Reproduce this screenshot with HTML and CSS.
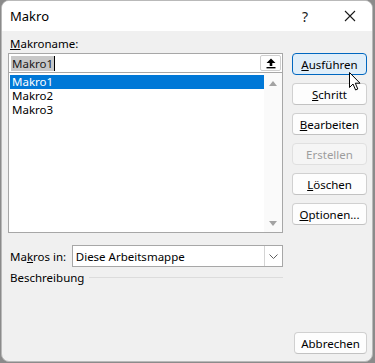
FILE: index.html
```html
<!DOCTYPE html>
<html lang="de">
<head>
  <meta charset="UTF-8" />
  <meta name="viewport" content="width=device-width, initial-scale=1.0"/>
  <title>Makro</title>
  <link rel="stylesheet" href="styles.css">
</head>
<body>
  <div class="window">
    <div class="titlebar">
      <span class="title">Makro</span>
      <span class="caption-btn">?</span>
      <span class="caption-btn close">
        <svg width="12" height="12" viewBox="0 0 12 12"><path d="M1 1 L11 11 M11 1 L1 11" stroke="#1a1a1a" stroke-width="1.1" fill="none"/></svg>
      </span>
    </div>

    <div class="content">
      <div class="left">
        <div class="label"><u>M</u>akroname:</div>
        <div class="namebox">
          <span class="name-sel">Makro1</span><span class="caret"></span>
          <span class="up-btn">
            <svg width="10" height="11" viewBox="0 0 10 11"><path d="M5 0.5 L9.5 5 L6.3 5 L6.3 8 L3.7 8 L3.7 5 L0.5 5 Z" fill="#000"/><rect x="0.5" y="9" width="9" height="1.4" fill="#000"/></svg>
          </span>
        </div>
        <div class="listbox">
          <ul class="items">
            <li class="selected">Makro1</li>
            <li>Makro2</li>
            <li>Makro3</li>
          </ul>
          <div class="scrollbar">
            <svg width="10" height="7" viewBox="0 0 10 7"><path d="M5 1 L9 6 L1 6 Z" fill="#a3a3a3"/></svg>
            <svg width="10" height="7" viewBox="0 0 10 7"><path d="M1 1 L9 1 L5 6 Z" fill="#a3a3a3"/></svg>
          </div>
        </div>

        <div class="source-row">
          <span class="source-label">Ma<u>k</u>ros in:</span>
          <div class="select">
            <span class="select-text">Diese Arbeitsmappe</span>
            <span class="drop">
              <svg width="9" height="5" viewBox="0 0 9 5"><path d="M0.5 0.5 L4.5 4.5 L8.5 0.5" stroke="#606060" fill="none"/></svg>
            </span>
          </div>
        </div>

        <div class="group-title">
          <span>Beschreibung</span>
          <span class="group-line"></span>
        </div>
      </div>

      <div class="right">
        <button class="btn default"><u>A</u>usführen</button>
        <button class="btn"><u>S</u>chritt</button>
        <button class="btn"><u>B</u>earbeiten</button>
        <button class="btn disabled">Erstellen</button>
        <button class="btn"><u>L</u>öschen</button>
        <button class="btn"><u>O</u>ptionen...</button>
      </div>
    </div>

    <div class="footer">
      <button class="btn cancel">Abbrechen</button>
    </div>

    <!-- mouse pointer over the default button -->
    <svg class="cursor" width="13" height="20" viewBox="0 0 13 20"><path d="M0.5 0.5 L0.5 15.5 L4 12 L6.6 18 L8.8 17 L6.3 11.2 L11 11.2 Z" fill="#fff" stroke="#000" stroke-width="1" stroke-linejoin="round"/></svg>
  </div>
</body>
</html>
```
FILE: styles.css
```css
body {
  margin: 0;
  background: #8b8b8b;
  font-family: "Noto Sans", "Segoe UI", sans-serif;
  font-size: 11.5px;
  color: #000;
}
.window {
  position: relative;
  box-sizing: border-box;
  margin-left: 1px;
  width: 372px;
  height: 362px;
  background: #f0f0f0;
  border: 1px solid #b9b9b9;
  border-radius: 8px;
  overflow: hidden;
  display: flex;
  flex-direction: column;
}
.titlebar {
  height: 30px;
  background: #fff;
  display: flex;
  align-items: center;
}
.title {
  flex: 1;
  padding-left: 8px;
  font-size: 13px;
}
.caption-btn {
  width: 46px;
  height: 30px;
  display: flex;
  align-items: center;
  justify-content: center;
  font-size: 14px;
  color: #1a1a1a;
}
.caption-btn.close {
  width: 44px;
}
.content {
  display: flex;
  padding: 5px 0 0 6px;
}
.left {
  width: 275px;
}
.label {
  height: 17px;
  line-height: 15px;
  padding-left: 2px;
}
.namebox {
  box-sizing: border-box;
  height: 20px;
  border: 1px solid #a7a7a7;
  background: #fff;
  display: flex;
  align-items: center;
  padding-left: 2px;
}
.name-sel {
  background: #c8c8c8;
  line-height: 15px;
  padding: 0 1px;
  color: #1a1a1a;
}
.caret {
  width: 1px;
  height: 15px;
  background: #000;
}
.up-btn {
  margin-left: auto;
  margin-right: 1px;
  box-sizing: border-box;
  width: 21px;
  height: 16px;
  border: 1px solid #cfcfcf;
  border-radius: 2px;
  background: #fff;
  display: flex;
  align-items: center;
  justify-content: center;
}
.listbox {
  box-sizing: border-box;
  height: 160px;
  border: 1px solid #a7a7a7;
  border-top: none;
  background: #fff;
  display: flex;
}
.items {
  list-style: none;
  margin: 0;
  padding: 2px 0 0 1px;
  flex: 1;
}
.items li {
  height: 14px;
  line-height: 14px;
  padding-left: 2px;
}
.items li.selected {
  background: #0078d7;
  color: #fff;
}
.scrollbar {
  width: 18px;
  background: #fafafa;
  display: flex;
  flex-direction: column;
  justify-content: space-between;
  align-items: center;
  padding: 7px 0 5px;
}
.source-row {
  display: flex;
  align-items: center;
  margin-top: 12px;
}
.source-label {
  width: 62px;
  padding-left: 2px;
}
.select {
  box-sizing: border-box;
  width: 212px;
  height: 22px;
  border: 1px solid #a7a7a7;
  background: #fff;
  display: flex;
  align-items: center;
}
.select-text {
  flex: 1;
  padding-left: 3px;
}
.drop {
  box-sizing: border-box;
  width: 18px;
  height: 20px;
  border-left: 1px solid #d4d4d4;
  display: flex;
  align-items: center;
  justify-content: center;
}
.group-title {
  display: flex;
  align-items: center;
  margin-top: 3px;
  height: 15px;
  padding-left: 2px;
}
.group-line {
  flex: 1;
  height: 1px;
  background: #dcdcdc;
  margin-left: 5px;
}
.right {
  display: flex;
  flex-direction: column;
  gap: 8px;
  margin: 17px 0 0 9px;
}
.btn {
  box-sizing: border-box;
  width: 75px;
  height: 22px;
  font: inherit;
  color: #000;
  background: #fdfdfd;
  border: 1px solid #d0d0d0;
  border-bottom-color: #c2c2c2;
  border-radius: 4px;
  padding: 0;
}
.btn.default {
  background: #e0eef9;
  border: 1px solid #0067c0;
}
.btn.disabled {
  color: #9d9d9d;
  background: #f5f5f5;
  border-color: #e0e0e0;
}
.footer {
  margin-top: auto;
  display: flex;
  justify-content: flex-end;
  padding: 0 5px 7px 0;
}
.btn.cancel {
  width: 73px;
}
.cursor {
  position: absolute;
  left: 347px;
  top: 71px;
}
```
